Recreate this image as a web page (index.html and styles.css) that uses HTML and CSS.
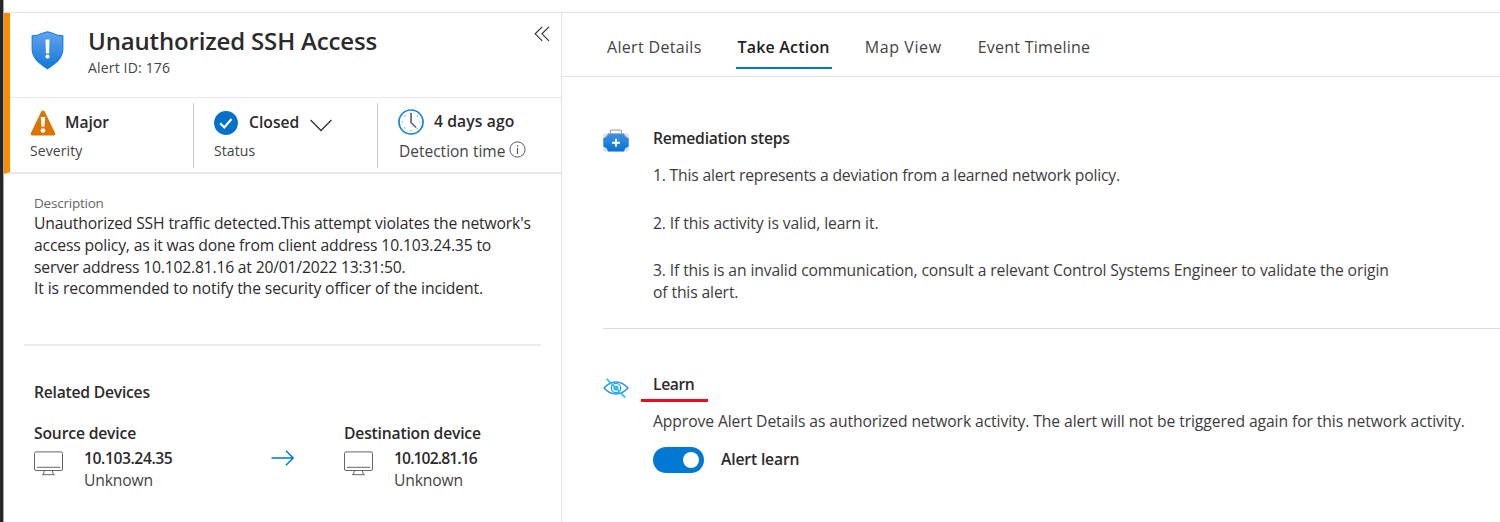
FILE: index.html
```html
<!DOCTYPE html>
<html lang="en">
<head>
<meta charset="utf-8">
<title>Unauthorized SSH Access</title>
<link rel="stylesheet" href="styles.css">
</head>
<body>
<div class="edge"></div>
<div class="page">
  <aside class="alert">
    <div class="summary">
      <header class="head">
        <svg class="shield" width="33" height="39" viewBox="0 0 33 39">
          <defs><linearGradient id="sg" x1="0" y1="0" x2="0" y2="1"><stop offset="0" stop-color="#64a4f2"/><stop offset="1" stop-color="#0f78d6"/></linearGradient></defs>
          <path d="M16.500 .8C20.500 .8 23.500 4.800 31.800 4.900V18C31.800 27.500 24 32.500 16.500 37.800C9 32.500 1.200 27.500 1.200 18V4.900C9.500 4.800 12.500 .8 16.500 .8Z" fill="url(#sg)" stroke="#1a7fdc" stroke-width="1.200"/>
          <path d="M14.500 8.500h4l-.4 14h-3.200z" fill="#fff"/><circle cx="16.500" cy="25.600" r="2.100" fill="#fff"/>
        </svg>
        <div class="heading">
          <h1>Unauthorized SSH Access</h1>
          <div class="alert-id">Alert ID: 176</div>
        </div>
        <svg class="collapse" width="16" height="16" viewBox="0 0 16 16" fill="none" stroke="#333" stroke-width="1.200"><path d="M8.200 .8L1.200 7.800L8.200 14.800M15 .8L8 7.800L15 14.800"/></svg>
      </header>
      <div class="stats">
        <div class="stat severity">
          <div class="value">
            <svg width="26" height="26" viewBox="0 0 26 26"><path d="M11.300 1.500Q13 -.7 14.700 1.500L25.200 23.300Q25.700 25.500 23.800 25.500H2.200Q.3 25.500 .8 23.300Z" fill="#db7500"/><path d="M10.800 7h4.400l-.7 9.700h-3z" fill="#fff"/><circle cx="13" cy="20.600" r="2.400" fill="#fff"/></svg>
            <span class="major">Major</span>
          </div>
          <div class="label">Severity</div>
        </div>
        <div class="stat status">
          <div class="value">
            <svg width="24" height="24" viewBox="0 0 24 24"><circle cx="12" cy="12" r="11.900" fill="#0470c8"/><path d="M6.200 12.200L10.300 16.400L17.500 8" fill="none" stroke="#fff" stroke-width="2.200"/></svg>
            <span class="closed">Closed</span>
            <svg class="chevron" width="22" height="13" viewBox="0 0 22 13"><path d="M.6 1L11 11.500L21.400 1" fill="none" stroke="#333" stroke-width="1.300"/></svg>
          </div>
          <div class="label stat-label">Status</div>
        </div>
        <div class="stat time">
          <div class="value">
            <svg width="26" height="26" viewBox="0 0 26 26"><circle cx="13" cy="13" r="12" fill="#fff" stroke="#1683e0" stroke-width="1.700"/><circle cx="13" cy="13" r="8.600" fill="none" stroke="#999" stroke-width="1.300" stroke-dasharray="1.100 5.650" stroke-dashoffset=".5"/><path d="M13 4v9.500l5 5" fill="none" stroke="#666" stroke-width="1.700"/></svg>
            <span class="days">4 days ago</span>
          </div>
          <div class="label time-label">Detection time
            <svg width="17" height="17" viewBox="0 0 17 17" fill="none" stroke="#555"><circle cx="8.500" cy="8.500" r="7.600"/><path d="M8.500 7v6M8.500 4.300v1.400" stroke-width="1.100"/></svg>
          </div>
        </div>
      </div>
    </div>
    <section class="description">
      <div class="caption">Description</div>
      <p>Unauthorized SSH traffic detected.This attempt violates the network's<br>access policy, as it was done from client address 10.103.24.35 to<br><span class="tight">server address 10.102.81.16 at 20/01/2022 13:31:50.</span><br><span class="loose">It is recommended to notify the security officer of the incident.</span></p>
    </section>
    <section class="related">
      <h2>Related Devices</h2>
      <div class="devices">
        <div class="device">
          <h3 class="source">Source device</h3>
          <div class="row">
            <svg class="monitor" width="29" height="25" viewBox="0 0 29 25" fill="none" stroke="#666"><rect x=".5" y=".9" width="28" height="18.600" rx="1.500"/><path d="M3 16.300H26.300M10.500 19.500L9.300 23.500M18.200 19.500L19.400 23.500M8 23.700H20.700"/></svg>
            <div><div class="ip">10.103.24.35</div><div class="kind">Unknown</div></div>
          </div>
        </div>
        <svg class="arrow" width="24" height="16" viewBox="0 0 24 16" fill="none" stroke="#0078d4" stroke-width="1.500"><path d="M.5 8H22M15 .8L22.200 8L15 15.200"/></svg>
        <div class="device">
          <h3 class="destination">Destination device</h3>
          <div class="row">
            <svg class="monitor" width="29" height="25" viewBox="0 0 29 25" fill="none" stroke="#666"><rect x=".5" y=".9" width="28" height="18.600" rx="1.500"/><path d="M3 16.300H26.300M10.500 19.500L9.300 23.500M18.200 19.500L19.400 23.500M8 23.700H20.700"/></svg>
            <div><div class="ip ip-dest">10.102.81.16</div><div class="kind">Unknown</div></div>
          </div>
        </div>
      </div>
    </section>
  </aside>
  <main class="detail">
    <nav class="tabs">
      <span class="tab">Alert Details</span>
      <span class="tab active">Take Action</span>
      <span class="tab map">Map View</span>
      <span class="tab timeline">Event Timeline</span>
    </nav>
    <section class="block remediation">
      <svg class="kit" width="26" height="24" viewBox="0 0 26 24">
        <defs><linearGradient id="kg" x1="0" y1="0" x2="0" y2="1"><stop offset="0" stop-color="#3f92e6"/><stop offset="1" stop-color="#0673d0"/></linearGradient></defs>
        <path d="M7.300 5V2.500Q7.300 1.200 8.600 1.200H17.200Q18.500 1.200 18.500 2.500V5" fill="none" stroke="#aaa" stroke-width="1.300"/>
        <rect x=".3" y="4.600" width="25.400" height="18" rx="1" fill="#dedede"/>
        <path d="M5 4.600H21Q22 8.500 25.700 9.200V17.500Q21.800 18.500 21 22.600H5Q4.200 18.500 .3 17.500V9.200Q4 8.500 5 4.600Z" fill="url(#kg)"/>
        <path d="M13 9.800v8M9 13.800h8" stroke="#fff" stroke-width="1.900"/>
      </svg>
      <div>
        <h2 class="rem-title">Remediation steps</h2>
        <ol class="steps">
          <li class="s1">1. This alert represents a deviation from a learned network policy.</li>
          <li class="s2">2. If this activity is valid, learn it.</li>
          <li class="s3">3. If this is an invalid communication, consult a relevant Control Systems Engineer to validate the origin<br>of this alert.</li>
        </ol>
      </div>
    </section>
    <section class="block learn">
      <svg class="eye" width="26" height="22" viewBox="0 0 26 22" fill="none">
        <path d="M1 11Q6.500 4.900 13 4.900T25 11Q19.500 17 13 17T1 11Z" stroke="#3292e8" stroke-width="1.500"/>
        <circle cx="13" cy="11" r="4.700" stroke="#3c9aec" stroke-width="1.300"/><circle cx="13" cy="11" r="2.600" fill="#25b5ea"/>
        <path d="M3.700 1.800L22.300 20.600" stroke="#22cbea" stroke-width="1.700"/>
      </svg>
      <div>
        <h2 class="learn-title">Learn</h2>
        <p class="approve">Approve Alert Details as authorized network activity. The alert will not be triggered again for this network activity.</p>
        <div class="switch-row"><span class="toggle"><span class="knob"></span></span><span class="toggle-label">Alert learn</span></div>
      </div>
    </section>
  </main>
</div>
</body>
</html>
```
FILE: styles.css
```css
* { box-sizing: border-box; }
body { margin: 0; height: 522px; display: flex; overflow: hidden; background: #fff; color: #2b2b2b; font: 15.7px/22px "Open Sans", "Noto Sans", sans-serif; letter-spacing: -.16px; white-space: nowrap; }
svg { display: block; flex: none; }
h1, h2, h3, p, ol { margin: 0; padding: 0; }
h2, h3 { font-size: 15.7px; line-height: 22px; font-weight: 600; }
.edge { width: 4px; flex: none; background: #252525; border-right: 1px solid #a5a5a5; }
.page { flex: 1; min-width: 0; display: flex; margin-top: 12px; border-top: 1px solid #dfe5ea; }
.alert { width: 558px; flex: none; border-right: 1px solid #e3e3e3; }
.summary { height: 161px; border-left: 6px solid #ff8c00; border-bottom: 2px solid #e8e8e8; }
.head { height: 85px; display: flex; border-bottom: 1px solid #e8e8e8; }
.shield { margin: 18px 0 0 21px; }
.heading { margin: 12px 0 0 24px; flex: 1; }
h1 { font-size: 24px; line-height: 32px; font-weight: 600; letter-spacing: -.16px; }
.alert-id { font-size: 14px; line-height: 20px; letter-spacing: .17px; color: #444; margin-top: 1px; }
.collapse { margin: 13px 11px 0 0; }
.stats { display: flex; height: 74px; }
.stat { height: 65px; margin-top: 5px; }
.severity { width: 184px; padding-left: 20px; border-right: 1px solid #ccc; }
.status { width: 184px; padding-left: 20px; border-right: 1px solid #ccc; }
.time { padding-left: 20px; }
.value { display: flex; align-items: center; height: 26px; margin-top: 7px; font-weight: 600; }
.major { margin: -2px 0 0 9px; letter-spacing: -.05px; }
.closed { margin: -2px 0 0 11px; letter-spacing: 0; }
.chevron { margin: 5px 0 0 11px; }
.time .value { margin-top: 6px; }
.days { margin: -3px 0 0 10px; letter-spacing: .1px; }
.label { font-size: 14px; line-height: 20px; margin-top: 5px; letter-spacing: .1px; color: #444; }
.time-label { display: flex; align-items: center; gap: 4px; margin: 6px 0 0 1px; font-size: 15.5px; letter-spacing: 0; line-height: 20px; }
.time-label svg { margin-top: -3px; }
.description { margin: 0 20px; padding: 20px 0 0 10px; height: 172px; border-bottom: 2px solid #ebebeb; }
.caption { font-size: 13.500px; line-height: 18px; color: #666; letter-spacing: -.22px; }
.description p { margin-top: 1.300px; line-height: 21.670px; }
.tight { letter-spacing: -.19px; }
.loose { letter-spacing: -.11px; }
.related { padding: 35px 0 0 30px; }
.related h2 { letter-spacing: -.24px; }
.devices { display: flex; margin-top: 19px; }
.device { width: 200px; }
.source { letter-spacing: -.17px; }
.destination { letter-spacing: -.2px; }
.row { display: flex; gap: 21px; margin-top: 3px; }
.monitor { margin-top: 4px; }
.ip { font-weight: 600; letter-spacing: -.44px; }
.ip-dest { letter-spacing: -.9px; }
.kind { color: #444; letter-spacing: -.17px; }
.arrow { margin: 28px 49px 0 37px; }
.detail { flex: 1; min-width: 0; }
.tabs { height: 64px; display: flex; padding: 21px 0 0 43px; gap: 32px; border-bottom: 1px solid #e3e3e3; }
.tab { height: 35px; line-height: 27px; padding: 0 2px; font-size: 16px; letter-spacing: .32px; color: #444; }
.active { font-weight: 600; color: #222; border-bottom: 2px solid #0078d4; letter-spacing: .18px; }
.map { letter-spacing: .6px; margin-left: -1px; }
.timeline { letter-spacing: .25px; }
.block { display: flex; margin-left: 41px; }
.remediation { height: 252px; padding-top: 50px; gap: 24px; border-bottom: 1px solid #dedede; }
.kit { margin: 2px 0 0; }
.rem-title { letter-spacing: -.24px; }
.steps { list-style: none; margin-top: 16px; color: #3c3c3c; }
.steps li { line-height: 21.670px; margin-bottom: 26px; }
.s1 { letter-spacing: -.185px; }
.s2 { letter-spacing: -.11px; }
.s3 { letter-spacing: -.126px; }
.learn { padding-top: 44px; gap: 24px; }
.eye { margin-top: 4px; }
.learn-title { width: 67px; height: 29px; margin-left: -12px; padding-left: 12px; border-bottom: 3px solid #ee0d20; letter-spacing: -.4px; }
.approve { margin-top: 8px; letter-spacing: -.096px; color: #3c3c3c; }
.switch-row { display: flex; align-items: center; margin-top: 15px; }
.toggle { display: flex; align-items: center; justify-content: flex-end; width: 51px; height: 26px; padding-right: 5px; border-radius: 13px; background: #0078d4; }
.knob { width: 16px; height: 16px; border-radius: 50%; background: #fff; }
.toggle-label { margin: -2px 0 0 17px; font-weight: 600; }
```
